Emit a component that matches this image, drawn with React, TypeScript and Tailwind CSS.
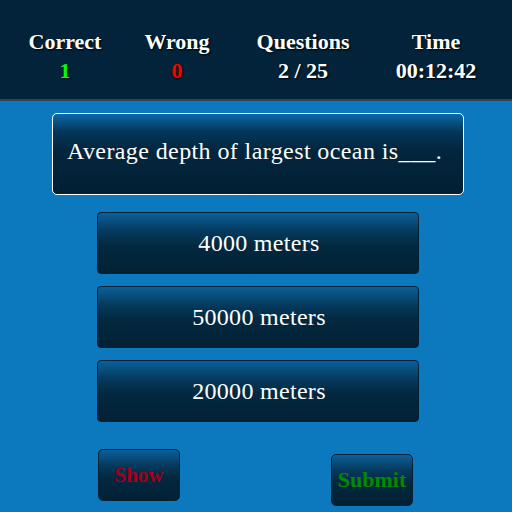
import React from "react";

const grad =
  "bg-[linear-gradient(to_bottom,#0b6099_0%,#053a5e_30%,#03283f_55%,#022135_100%)]";

export default function App() {
  return (
    <div className="w-[512px] h-[512px] bg-[#0c79be] overflow-hidden flex flex-col font-['Liberation_Serif','Times_New_Roman',serif]">
      <div className="h-[101px] shrink-0 bg-[#02233a] border-b-2 border-[#2c4658] flex items-start pt-[27px] pl-[10px]">
        <div className="flex">
          <div className="w-[110px] flex flex-col items-center text-[22px] font-bold leading-[29px] [text-shadow:1px_1px_2px_#000]">
            <span className="text-white">Correct</span>
            <span className="text-[#00ff00]">1</span>
          </div>
          <div className="w-[114px] flex flex-col items-center text-[22px] font-bold leading-[29px] [text-shadow:1px_1px_2px_#000]">
            <span className="text-white">Wrong</span>
            <span className="text-[#ff0000]">0</span>
          </div>
          <div className="w-[138px] flex flex-col items-center text-[22px] font-bold leading-[29px] [text-shadow:1px_1px_2px_#000]">
            <span className="text-white">Questions</span>
            <span className="text-white">2 / 25</span>
          </div>
          <div className="w-[128px] flex flex-col items-center text-[22px] font-bold leading-[29px] [text-shadow:1px_1px_2px_#000]">
            <span className="text-white">Time</span>
            <span className="text-white">00:12:42</span>
          </div>
        </div>
      </div>

      <div className="pl-[52px] pt-[12px]">
        <div className="w-[412px] h-[82px] rounded-[5px] border border-white bg-[linear-gradient(to_bottom,#0b6aa9_0%,#04365a_22%,#03263e_45%,#021f33_100%)] flex items-center pl-[14px] pb-[6px]">
          <span className="text-white text-[24px] leading-[29px] tracking-[0.4px]">
            Average depth of largest ocean is___.
          </span>
        </div>
      </div>

      <div className="pl-[97px] pt-[17px] flex flex-col gap-[12px]">
        {["4000 meters", "50000 meters", "20000 meters"].map((t) => (
          <div
            key={t}
            className={`w-[322px] h-[62px] rounded-[4px] border border-[#022033] ${grad} flex items-center justify-center`}
          >
            <span className="text-white text-[24px] leading-[29px] tracking-[0.3px] pl-[2px]">{t}</span>
          </div>
        ))}
      </div>

      <div className="flex items-start pt-[27px]">
        <div className={`ml-[98px] w-[82px] h-[52px] rounded-[5px] border border-[#022033] ${grad} flex items-center justify-center`}>
          <span className="text-[#a0001a] text-[21px] font-bold leading-[24px]">Show</span>
        </div>
        <div className={`ml-[151px] mt-[5px] w-[82px] h-[52px] rounded-[5px] border border-[#022033] ${grad} flex items-center justify-center`}>
          <span className="text-[#008c00] text-[22px] font-bold leading-[24px]">Submit</span>
        </div>
      </div>
    </div>
  );
}
